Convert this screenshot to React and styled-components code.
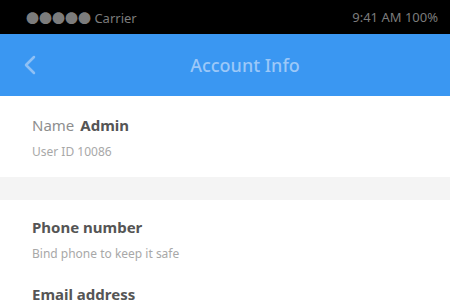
import React from 'react';
import styled, { createGlobalStyle } from 'styled-components';

const GlobalStyle = createGlobalStyle`
  html, body {
    margin: 0;
    padding: 0;
    background: #ffffff;
    font-family: "Noto Sans", "Noto Sans CJK SC", sans-serif;
  }
`

const Screen = styled.div`
  width: 450px;
  height: 300px;
  overflow: hidden;
  display: flex;
  flex-direction: column;
  background: #ffffff;
  & > * {
    flex-shrink: 0;
  }
`

const StatusBar = styled.div`
  height: 34px;
  background: #000000;
  display: flex;
  align-items: center;
  justify-content: space-between;
  padding: 0 12px 0 26px;
  color: #7c7c7c;
  font-size: 13px;
`

const NavBar = styled.div`
  height: 62px;
  background: #3a97f2;
  display: grid;
  grid-template-columns: 60px 1fr 20px;
  align-items: center;
`

const BackButton = styled.div`
  display: flex;
  align-items: center;
  justify-content: center;
  color: #8fc0f5;
`

const Title = styled.div`
  text-align: center;
  color: #9cc8f8;
  font-size: 18px;
  font-weight: 500;
`

const List = styled.div`
  display: flex;
  flex-direction: column;
`

const Row = styled.div`
  padding: ${p => p.$pad};
  display: flex;
  flex-direction: column;
  gap: 9px;
`

const RowTitle = styled.div`
  font-size: 15px;
  line-height: 20px;
  font-weight: 700;
  color: #555555;
  display: flex;
  gap: 6px;
`

const Muted = styled.span`
  font-weight: 400;
  color: #8e8e8e;
`

const RowSub = styled.div`
  font-size: 12px;
  line-height: 16px;
  color: #a8a8a8;
`

const Divider = styled.div`
  height: 23px;
  background: #f4f4f4;
`

export default function App() {
  return (
    <>
      <GlobalStyle />
      <Screen>
        <StatusBar>
          <span>●●●●● Carrier</span>
          <span>9:41 AM 100%</span>
        </StatusBar>
        <NavBar>
          <BackButton>
            <svg width="12" height="20" viewBox="0 0 12 20" fill="none">
              <path d="M10 2 L2 10 L10 18" stroke="currentColor" strokeWidth="2.5" strokeLinecap="round" strokeLinejoin="round" />
            </svg>
          </BackButton>
          <Title>Account Info</Title>
          <div />
        </NavBar>
        <List>
          <Row $pad="19px 32px 17px">
            <RowTitle><Muted>Name</Muted>Admin</RowTitle>
            <RowSub>User ID 10086</RowSub>
          </Row>
          <Divider />
          <Row $pad="17px 32px 22px">
            <RowTitle>Phone number</RowTitle>
            <RowSub>Bind phone to keep it safe</RowSub>
          </Row>
          <Row $pad="0 32px">
            <RowTitle>Email address</RowTitle>
          </Row>
        </List>
      </Screen>
    </>
  );
}
